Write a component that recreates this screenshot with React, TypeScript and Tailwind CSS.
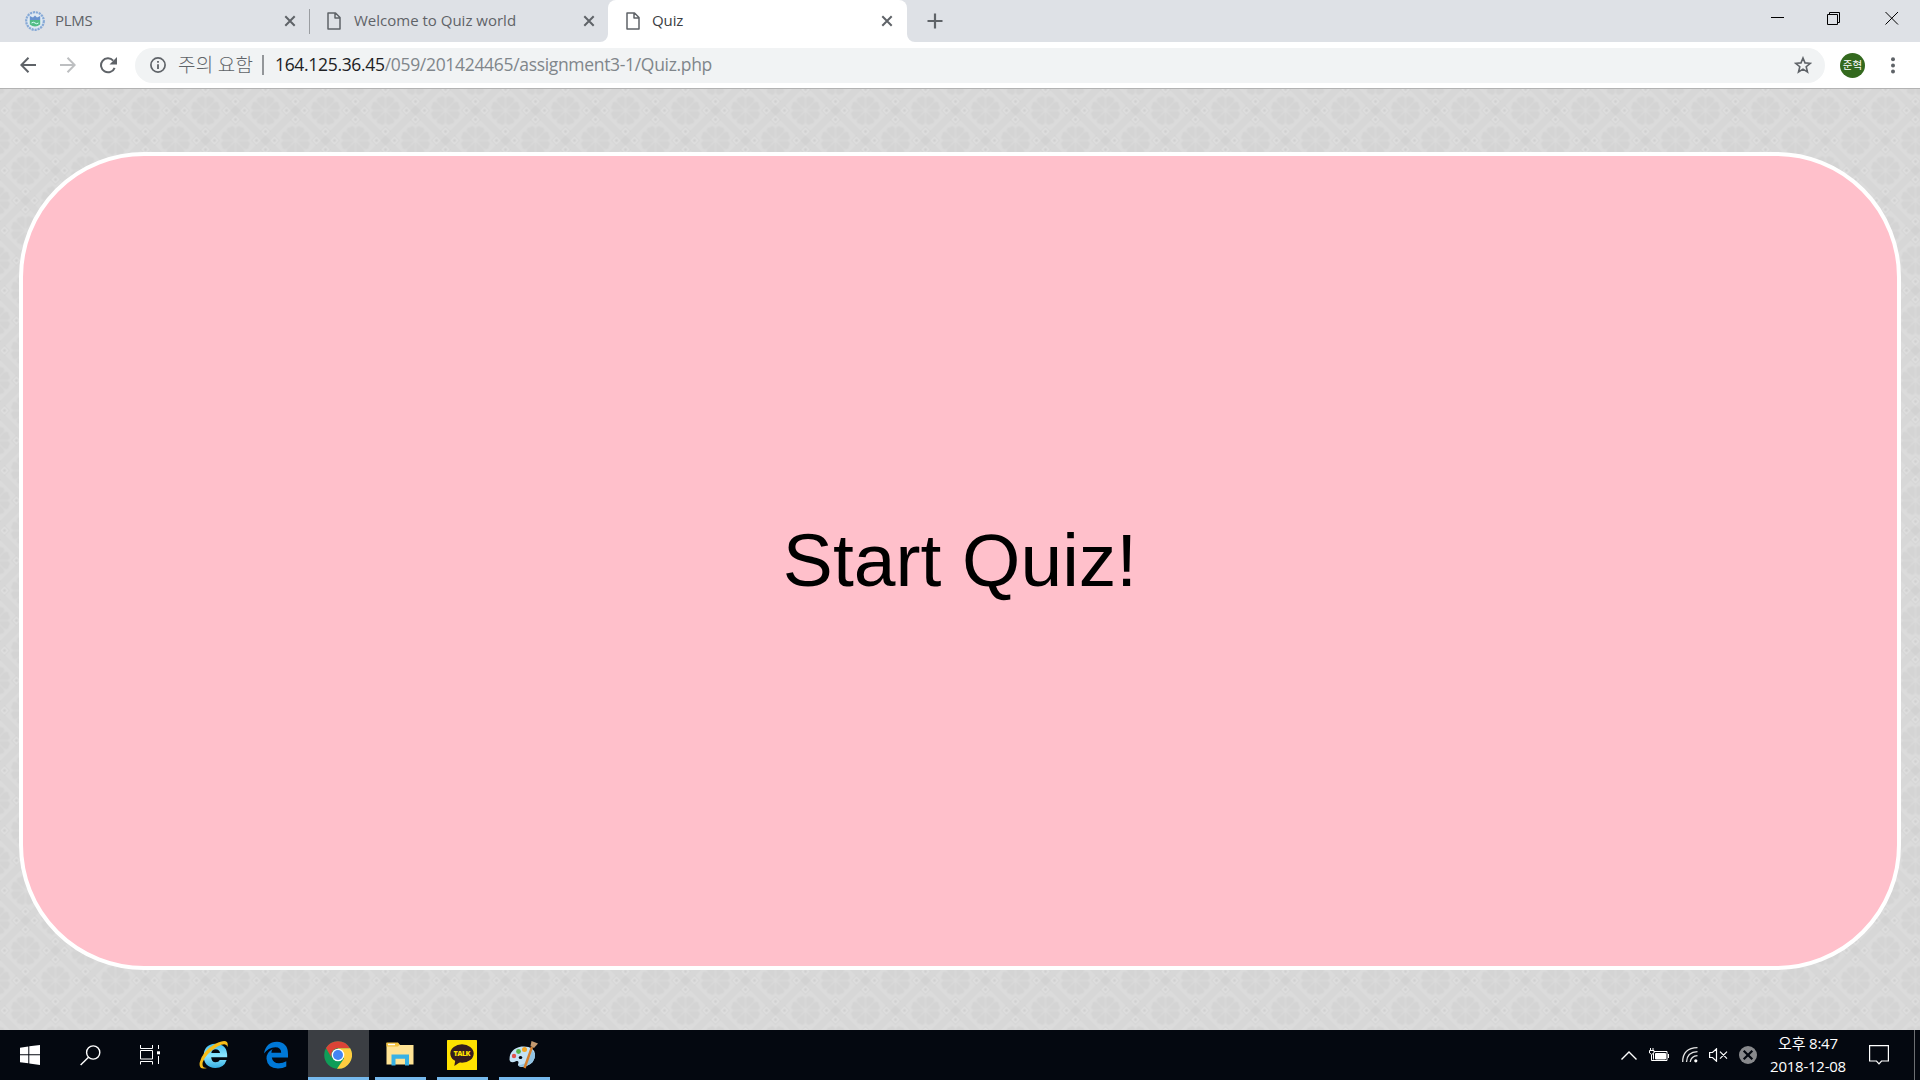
import React from "react";

const ui = "font-['Open_Sans','Noto_Sans_CJK_KR',sans-serif]";

function X({ className = "" }: { className?: string }) {
  return (
    <svg className={className} width="12" height="12" viewBox="0 0 12 12" fill="none" stroke="#5f6368" strokeWidth="2">
      <path d="M1.3 1.3 L10.7 10.7 M10.7 1.3 L1.3 10.7" />
    </svg>
  );
}

function Page() {
  return (
    <svg width="14" height="18" viewBox="0 0 14 18" fill="none" stroke="#5f6368" strokeWidth="1.5" strokeLinejoin="round">
      <path d="M1 1 H8.5 L13 5.5 V17 H1 Z M8 1 V6 H13" />
    </svg>
  );
}

function Seal() {
  return (
    <svg width="20" height="20" viewBox="0 0 20 20">
      <circle cx="10" cy="10" r="8.8" fill="#dfe9f3" stroke="#86a9d6" strokeWidth="2.2" strokeDasharray="2.2 .8" />
      <path d="M4.8 5 L8 6.5 L10 4.5 L12 6.5 L15.2 5 V9 H4.8 Z" fill="#6a93cf" />
      <path d="M4.8 9 H15.2 V13.5 Q10 17.5 4.8 13.5 Z" fill="#52bd85" />
      <path d="M6.5 12 Q8.5 10.5 10 12 T13.5 12" stroke="#dff" fill="none" />
    </svg>
  );
}

function TabStrip() {
  return (
    <div className="flex h-[42px] items-start bg-[#dee1e6]">
      <div className="flex h-[42px] w-[309px] items-center pl-[25px]">
        <Seal />
        <span className="mb-px ml-[10px] w-[229px] text-[15px] tracking-[-0.3px] text-[#5f6368]">PLMS</span>
        <X />
      </div>
      <div className="mt-[9px] h-[25px] w-px bg-[#9a9da1]" />
      <div className="flex h-[42px] w-[298px] items-center pl-[17px]">
        <Page />
        <span className="mb-px ml-[13px] w-[229px] text-[15px] whitespace-nowrap text-[#5f6368]">Welcome to Quiz world</span>
        <X />
      </div>
      <div className="relative flex h-[42px] w-[299px] items-center rounded-t-[8px] bg-white pl-[18px]">
        <svg className="absolute bottom-0 -left-[8px]" width="8" height="8"><path d="M8 0 A8 8 0 0 1 0 8 H8Z" fill="#fff" /></svg>
        <svg className="absolute -right-[8px] bottom-0" width="8" height="8"><path d="M0 0 A8 8 0 0 0 8 8 H0Z" fill="#fff" /></svg>
        <Page />
        <span className="mb-px ml-[12px] w-[229px] text-[15px] tracking-[-0.1px] text-[#3c4043]">Quiz</span>
        <X />
      </div>
      <svg className="mt-[13px] ml-[20px]" width="16" height="16" stroke="#5f6368" strokeWidth="2.2"><path d="M8 .5 V15.5 M.5 8 H15.5" /></svg>
      <div className="ml-auto flex pt-[11px] pr-[21px]">
        <svg width="14" height="14" stroke="#000"><path d="M0 6.5 H13" /></svg>
        <svg className="ml-[42px]" width="14" height="14" stroke="#000" fill="none"><path d="M.5 3.5 H10.5 V13.5 H.5Z M2.5 3 V1.5 H12.5 V11.5 H11" /></svg>
        <svg className="ml-[44px]" width="14" height="14" stroke="#000" fill="none"><path d="M.5 1 L13 13.5 M13 1 L.5 13.5" /></svg>
      </div>
    </div>
  );
}

function Toolbar() {
  return (
    <div className="flex h-[47px] items-center border-b border-[#b3b3b3] bg-white pl-[20px]">
      <svg width="16" height="16" fill="none" stroke="#5f6368" strokeWidth="2"><path d="M16 8 H1.5 M8.5 .8 L1.3 8 L8.5 15.2" /></svg>
      <svg className="ml-[24px]" width="16" height="16" fill="none" stroke="#bdbfc1" strokeWidth="2"><path d="M0 8 H14.5 M7.5 .8 L14.7 8 L7.5 15.2" /></svg>
      <svg className="ml-[24px]" width="17" height="17" viewBox="0 0 17 17"><path d="M14.6 10.8 A7 7 0 1 1 13.2 3.6" fill="none" stroke="#5f6368" strokeWidth="2" /><path d="M17 0 V7.5 H9.5Z" fill="#5f6368" /></svg>
      <div className="ml-[18px] flex h-[35px] w-[1690px] items-center rounded-full bg-[#f1f3f4] pl-[15px]">
        <svg width="16" height="16" fill="none" stroke="#5f6368"><circle cx="8" cy="8" r="7.1" strokeWidth="1.7" /><path d="M8 7.2 V12 M8 4 V5.8" strokeWidth="1.8" /></svg>
        <span className="mb-[3px] ml-[12px] w-[80px] font-['Noto_Sans_CJK_KR',sans-serif] text-[19px] leading-none font-light tracking-[0.2px] whitespace-nowrap text-[#5f6368]">주의 요함</span>
        <span className="ml-[4px] h-[20px] w-[2px] bg-[#939699]" />
        <span className="mb-px ml-[11px] text-[17.5px] tracking-[-0.32px] whitespace-nowrap text-[#80868b]"><span className="text-[#202124]">164.125.36.45</span>/059/201424465/assignment3-1/Quiz.php</span>
        <svg className="mr-[13px] ml-auto" width="18" height="18" viewBox="0 0 18 18" fill="none" stroke="#5f6368" strokeWidth="1.6"><path d="M9 2 L11 6.9 L16.3 7.3 L12.2 10.7 L13.5 16 L9 13.1 L4.5 16 L5.8 10.7 L1.7 7.3 L7 6.9Z" /></svg>
      </div>
      <div className="ml-[15px] flex size-[25px] items-center justify-center rounded-full bg-[#33691e] pb-px font-['Noto_Sans_CJK_KR',sans-serif] text-[10.5px] whitespace-nowrap text-white">준혁</div>
      <svg className="ml-[26px]" width="4" height="17" fill="#5f6368"><circle cx="2" cy="2.2" r="2" /><circle cx="2" cy="8.4" r="2" /><circle cx="2" cy="14.6" r="2" /></svg>
    </div>
  );
}

function Flower({ x, y }: { x: number; y: number }) {
  return (
    <g transform={`translate(${x} ${y})`}>
      {[22.5, 67.5, 112.5, 157.5, 202.5, 247.5, 292.5, 337.5].map((a) => (
        <path key={a} transform={`rotate(${a})`} d="M0 -1.5 L4.1 -11 Q4.4 -14.6 1.8 -14.8 L0 -14.3 L-1.8 -14.8 Q-4.4 -14.6 -4.1 -11Z" fill="#d4d4d4" />
      ))}
    </g>
  );
}

function Lattice({ x, y }: { x: number; y: number }) {
  return (
    <g transform={`translate(${x} ${y})`}>
      {[[-9, 0], [9, 0], [0, -9], [0, 9]].map(([a, b]) => (
        <g key={a + "," + b} transform={`translate(${a} ${b})`}>
          <path d="M0 -5 L5 0 L0 5 L-5 0Z" fill="#dedede" stroke="#d1d1d1" strokeWidth=".9" />
          <path d="M-1.6 0 H1.6 M0 -1.6 V1.6" stroke="#cbcbcb" strokeWidth="1.1" />
        </g>
      ))}
    </g>
  );
}

function Wallpaper() {
  return (
    <svg className="absolute inset-0 size-full">
      <defs>
        <pattern id="tile" width="60" height="60" x="25.5" y="21.5" patternUnits="userSpaceOnUse">
          <rect width="60" height="60" fill="#dbdbdb" />
          {[-4, -2, 0, 2, 4].map((o) => (
            <path key={o} transform={`translate(0 ${o})`} d="M-10 40 L40 -10 M20 70 L70 20 M-10 20 L40 70 M20 -10 L70 40" stroke="#d1d1d1" strokeWidth=".9" />
          ))}
          {[[0, 0], [60, 0], [0, 60], [60, 60], [30, 30]].map(([x, y]) => <Flower key={x + "f" + y} x={x} y={y} />)}
          {[[30, 0], [0, 30], [60, 30], [30, 60]].map(([x, y]) => <Lattice key={x + "l" + y} x={x} y={y} />)}
        </pattern>
      </defs>
      <rect width="100%" height="100%" fill="url(#tile)" />
    </svg>
  );
}

function Taskbar() {
  return (
    <div className="flex h-[50px] items-center bg-[#040810] text-white">
      <div className="flex w-[60px] justify-center"><svg width="20" height="20" fill="#fff"><path d="M0 2.7 L8.3 1.5 V9.3 H0Z M9.3 1.3 L20 0 V9.3 H9.3Z M0 10.3 H8.3 V18.3 L0 17.2Z M9.3 10.3 H20 V20 L9.3 18.5Z" /></svg></div>
      <div className="flex w-[60px] justify-center"><svg width="21" height="21" fill="none" stroke="#fff" strokeWidth="1.4"><circle cx="13.2" cy="7.5" r="6.6" /><path d="M8.5 12.2 L.6 20.1" /></svg></div>
      <div className="flex w-[60px] justify-center"><svg width="20" height="20" fill="none" stroke="#fff"><path d="M.5 0 V3.5 H12.5 V0 M.5 5.5 H12.5 V14 H.5Z M.5 19.5 V16.5 H12.5 V19.5 M18.5 0 V4 M18.5 11 V19" /><path d="M17 6.3 H20 V9.3 H17Z" fill="#fff" stroke="none" /></svg></div>
      <div className="flex w-[66px] justify-center pl-px">
        <svg width="30" height="30" viewBox="0 0 30 30">
          <defs><linearGradient id="ie" x2="0" y2="1"><stop stopColor="#42bdf0" /><stop offset=".5" stopColor="#8ce6ff" /><stop offset="1" stopColor="#36afe4" /></linearGradient></defs>
          <path fillRule="evenodd" d="M28.2 17.3 H12.2 Q12.5 22.3 16.5 22.3 Q19.8 22.3 20.8 20 H27.6 Q25 28 16.3 28 Q5 27.5 4.6 16 Q5 4.2 16.3 3.8 Q28.8 4 28.2 17.3Z M12.3 13 H21 Q20.3 9.3 16.7 9.3 Q13 9.3 12.3 13Z" fill="url(#ie)" />
          <path d="M8 28 Q-.5 30.5 .7 22.5 Q3.5 11 16.5 3.8 Q30.5 -3 28.5 7 Q27.5 2 18.5 6.5 Q7.5 13 3.8 22 Q2.4 28 8 28Z" fill="#f8bd18" />
        </svg>
      </div>
      <div className="flex w-[60px] justify-center">
        <svg width="26" height="28" viewBox="0 0 26 28"><path d="M1 12.5 Q3 1 14 .8 Q25 1.5 25 13 V16.5 H8.8 Q9.8 22.3 16 22.3 Q20 22.3 23.3 20.3 V25.6 Q19.8 27.5 15 27.5 Q4.3 27.2 3.5 17.8 Q3.2 11.5 9.6 8 Q8.4 9.6 8.4 11.7 H18.2 Q18 6.2 12.5 6.2 Q5 6.5 1 12.5Z" fill="#0078d7" /></svg>
      </div>
      <div className="mr-[6px] ml-[2px] flex h-[50px] w-[61px] items-center justify-center border-b-[3px] border-[#76b9ed] bg-[#3b3e43] pt-[3px] pr-[2px]">
        <svg width="28" height="28" viewBox="0 0 28 28">
          <circle cx="14" cy="14" r="13.8" fill="#0f9d58" />
          <path d="M2 7 A13.8 13.8 0 0 1 26 7.3 H14 A7 7 0 0 0 8 17.5Z" fill="#db4437" />
          <path d="M14 7.3 H26.2 A13.8 13.8 0 0 1 13 27.8 L20 17.5Z" fill="#ffcd40" />
          <circle cx="14" cy="14" r="6.3" fill="#fff" /><circle cx="14" cy="14" r="5" fill="#4285f4" />
        </svg>
      </div>
      <div className="mr-[11px] flex h-[50px] w-[51px] items-center justify-center border-b-[3px] border-[#76b9ed] pt-px pr-[2px]">
        <svg width="28" height="24" viewBox="0 0 28 24"><path d="M.5 1 H12 L14 3 H27.5 V22.5 H.5Z" fill="#ffe394" /><path d="M.5 .5 H12 L13.5 3 L12 4.5 H.5Z" fill="#f4c23c" /><path d="M2 1.8 H9 V3.2 H2Z" fill="#fff" /><path d="M5.5 12.5 H23 V23.5 H19 V16.8 H9.5 V23.5 H5.5Z" fill="#38b1e5" /></svg>
      </div>
      <div className="mr-[11px] flex h-[50px] w-[51px] items-center justify-center border-b-[3px] border-[#76b9ed] pt-[3px] pr-px">
        <svg width="30" height="30" viewBox="0 0 30 30"><rect width="30" height="30" rx=".6" fill="#ffe100" /><ellipse cx="15" cy="13.5" rx="11.7" ry="9.3" fill="#351c1e" /><path d="M8.5 19 L7.3 26 L14 21.5Z" fill="#351c1e" /><text x="15" y="16.2" textAnchor="middle" fontSize="7.2" fontWeight="800" fontFamily="Open Sans, sans-serif" fill="#ffe100" textLength="17">TALK</text></svg>
      </div>
      <div className="flex h-[50px] w-[51px] items-center justify-center border-b-[3px] border-[#76b9ed] pt-[3px] pr-[3px]">
        <svg width="30" height="30" viewBox="0 0 30 30"><path d="M1.5 20 Q1 9 13.5 6.5 Q26 5.5 27 14 Q27.5 23 17.5 26.5 Q10 28 10 24.5 Q11.5 20.5 8.5 21 Q2.5 24 1.5 20Z" fill="#c3e2f5" /><path d="M27 14 Q27.5 23 17.5 26.5 Q11 27.5 10.5 25 Q21 25 24 10Z" fill="#91c3e3" /><ellipse cx="12.5" cy="17.5" rx="1.8" ry="1.5" fill="#040810" /><circle cx="6" cy="16" r="2.2" fill="#e0524c" /><circle cx="10.5" cy="11.5" r="2.4" fill="#55b649" /><circle cx="16.5" cy="9.5" r="2.5" fill="#f5a623" /><path d="M24 7 L16.5 28" stroke="#d6802d" strokeWidth="2.4" /><path d="M22.5 6 L23.5 1 L30 3.5 L26 8Z" fill="#c49a70" /></svg>
      </div>
      <div className="ml-auto flex h-full items-center">
        <svg width="16" height="9" fill="none" stroke="#fff" strokeWidth="1.4"><path d="M.5 8.5 L8 1 L15.5 8.5" /></svg>
        <svg className="ml-[12px]" width="20" height="14" fill="none" stroke="#fff"><path d="M4.5 3.5 H18 V12.5 H4.5Z M19.5 6 V10" /><path d="M6.5 5.5 H16.5 V11 H6.5Z" fill="#fff" /><path d="M1.5 0 V2.5 M4 0 V2.5 M.5 2.5 H5 V5 Q2.5 8 .5 5Z M2.5 7 V12.5 H5" fill="#040810" /></svg>
        <svg className="ml-[13px]" width="16" height="16" fill="none" stroke="#e4e4e4" strokeWidth="1.3"><path d="M.7 15 Q.7 1 15.5 .7 M4.5 15 Q5 5 15.5 4.7 M8.2 15 Q9 9 15.5 8.6" /><circle cx="13.8" cy="13.8" r="1.6" fill="#fff" stroke="none" /></svg>
        <svg className="ml-[11px]" width="19" height="14" fill="none" stroke="#fff" strokeWidth="1.2"><path d="M.6 4.5 H3.5 L7.5 .8 V13.2 L3.5 9.5 H.6Z M11 3.7 L18 10.7 M18 3.7 L11 10.7" /></svg>
        <svg className="ml-[11px]" width="18" height="18"><circle cx="9" cy="9" r="9" fill="#88898c" /><path d="M4.7 4.7 L13.3 13.3 M13.3 4.7 L4.7 13.3" stroke="#040810" strokeWidth="2.2" /></svg>
        <div className="ml-[11px] flex w-[80px] flex-col items-center pb-px text-[15px] leading-[23px] whitespace-nowrap">
          <span className="tracking-[-0.2px]">오후 8:47</span><span className="tracking-[-0.25px]">2018-12-08</span>
        </div>
        <svg className="mr-[25px] ml-[21px]" width="20" height="20" fill="none" stroke="#fff" strokeWidth="1.2"><path d="M.6 .6 H19.4 V16 H12.5 L10 18.8 L7.5 16 H.6Z" /></svg>
        <div className="mr-[5px] h-full w-px bg-[#6c6f73]" />
      </div>
    </div>
  );
}

export default function App() {
  return (
    <div className={`flex h-[1080px] w-[1920px] flex-col overflow-hidden ${ui}`}>
      <TabStrip />
      <Toolbar />
      <main className="relative flex min-h-0 flex-1 px-[19.2px] pt-[63px] pb-[60px]">
        <Wallpaper />
        <button className="relative flex flex-1 items-center justify-center rounded-[125px] border-4 border-white bg-[#ffc0cb] pb-[2px] font-['Liberation_Sans',Arial,sans-serif] text-[75px] leading-none text-black">
          Start Quiz!
        </button>
      </main>
      <Taskbar />
    </div>
  );
}
